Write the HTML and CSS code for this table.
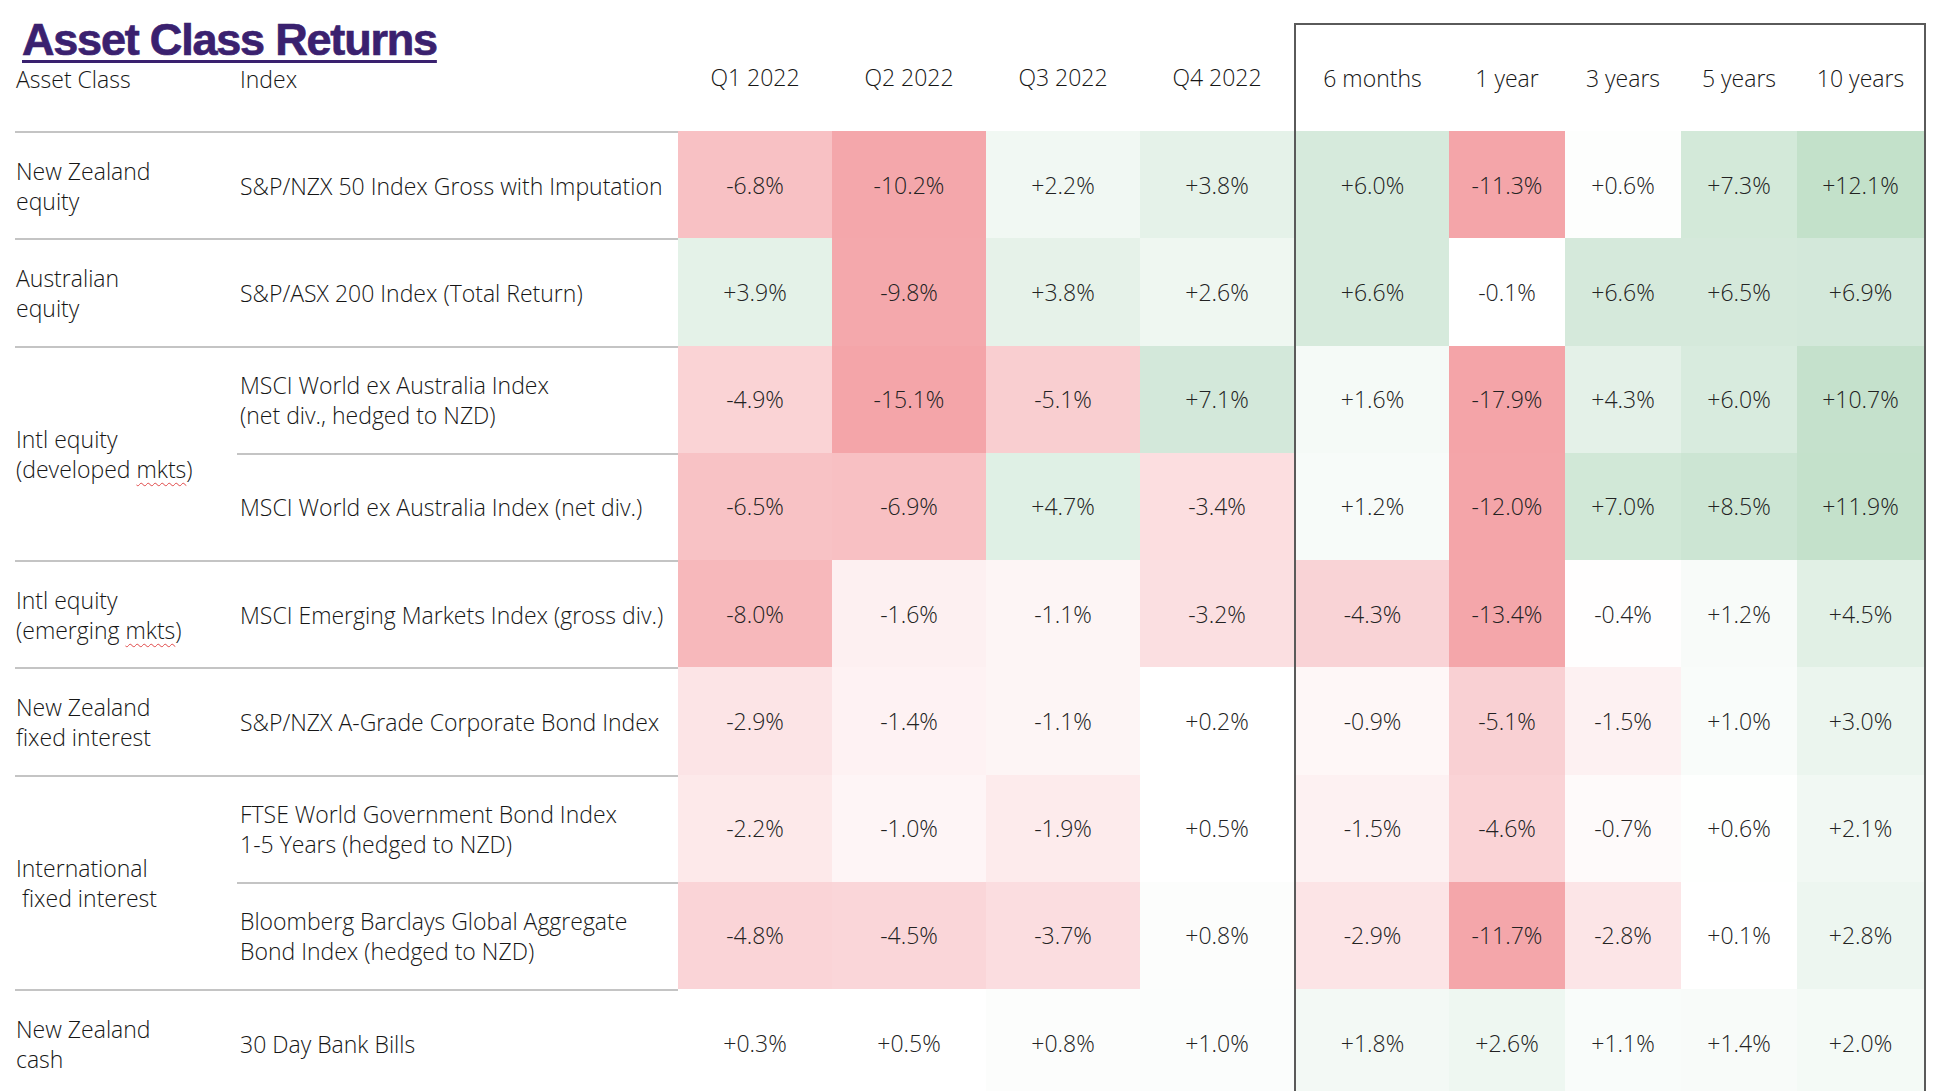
FILE: index.html
```html
<!DOCTYPE html>
<html lang="en">
<head>
<meta charset="utf-8">
<title>Asset Class Returns</title>
<link rel="stylesheet" href="styles.css">
</head>
<body>
<div class="page">
  <div class="left">
    <div class="head-left">
      <h1 class="title">Asset Class Returns</h1>
      <div class="labels"><span>Asset Class</span><span>Index</span></div>
    </div>
    <div class="qh">Q1 2022</div>
    <div class="qh">Q2 2022</div>
    <div class="qh">Q3 2022</div>
    <div class="qh">Q4 2022</div>

    <div class="ac"><div>New Zealand<br>equity</div></div>
    <div class="ix"><div>S&amp;P/NZX 50 Index Gross with Imputation</div></div>
    <div class="v" style="background:#f8c1c4">-6.8%</div>
    <div class="v" style="background:#f4a7ab">-10.2%</div>
    <div class="v" style="background:#f1f8f3">+2.2%</div>
    <div class="v" style="background:#e5f2e9">+3.8%</div>

    <div class="ac"><div>Australian<br>equity</div></div>
    <div class="ix"><div>S&amp;P/ASX 200 Index (Total Return)</div></div>
    <div class="v" style="background:#e4f2e8">+3.9%</div>
    <div class="v" style="background:#f4a8ac">-9.8%</div>
    <div class="v" style="background:#e6f2e9">+3.8%</div>
    <div class="v" style="background:#eff7f1">+2.6%</div>

    <div class="ac span2"><div>Intl equity<br>(developed <span class="sp">mkts</span>)</div></div>
    <div class="ix"><div>MSCI World ex Australia Index<br>(net div., hedged to NZD)</div></div>
    <div class="v" style="background:#fad3d5">-4.9%</div>
    <div class="v" style="background:#f4a5a9">-15.1%</div>
    <div class="v" style="background:#f9ced0">-5.1%</div>
    <div class="v" style="background:#d3e8da">+7.1%</div>

    <div class="ix"><div>MSCI World ex Australia Index (net div.)</div></div>
    <div class="v" style="background:#f8c2c5">-6.5%</div>
    <div class="v" style="background:#f8c0c3">-6.9%</div>
    <div class="v" style="background:#dff0e5">+4.7%</div>
    <div class="v" style="background:#fcdee0">-3.4%</div>

    <div class="ac"><div>Intl equity<br>(emerging <span class="sp">mkts</span>)</div></div>
    <div class="ix"><div>MSCI Emerging Markets Index (gross div.)</div></div>
    <div class="v" style="background:#f7b8bb">-8.0%</div>
    <div class="v" style="background:#fdf0f1">-1.6%</div>
    <div class="v" style="background:#fdf5f5">-1.1%</div>
    <div class="v" style="background:#fbdfe1">-3.2%</div>

    <div class="ac"><div>New Zealand<br>fixed interest</div></div>
    <div class="ix"><div>S&amp;P/NZX A-Grade Corporate Bond Index</div></div>
    <div class="v" style="background:#fce4e6">-2.9%</div>
    <div class="v" style="background:#fef2f3">-1.4%</div>
    <div class="v" style="background:#fdf5f5">-1.1%</div>
    <div class="v" style="background:#ffffff">+0.2%</div>

    <div class="ac span2"><div>International<br><span class="indent">fixed interest</span></div></div>
    <div class="ix"><div>FTSE World Government Bond Index<br>1-5 Years (hedged to NZD)</div></div>
    <div class="v" style="background:#fde9ea">-2.2%</div>
    <div class="v" style="background:#fef5f6">-1.0%</div>
    <div class="v" style="background:#fdebec">-1.9%</div>
    <div class="v" style="background:#ffffff">+0.5%</div>

    <div class="ix"><div>Bloomberg Barclays Global Aggregate<br>Bond Index (hedged to NZD)</div></div>
    <div class="v" style="background:#fad4d7">-4.8%</div>
    <div class="v" style="background:#fad6d9">-4.5%</div>
    <div class="v" style="background:#fbdde0">-3.7%</div>
    <div class="v" style="background:#fcfdfc">+0.8%</div>

    <div class="ac"><div>New Zealand<br>cash</div></div>
    <div class="ix"><div>30 Day Bank Bills</div></div>
    <div class="v" style="background:#ffffff">+0.3%</div>
    <div class="v" style="background:#ffffff">+0.5%</div>
    <div class="v" style="background:#fcfdfc">+0.8%</div>
    <div class="v" style="background:#fbfdfc">+1.0%</div>
  </div>

  <div class="right">
    <div class="rh">6 months</div>
    <div class="rh">1 year</div>
    <div class="rh">3 years</div>
    <div class="rh">5 years</div>
    <div class="rh">10 years</div>

    <div class="v" style="background:#d6eadc">+6.0%</div>
    <div class="v" style="background:#f4a5a9">-11.3%</div>
    <div class="v" style="background:#fdfefd">+0.6%</div>
    <div class="v" style="background:#d3e9d9">+7.3%</div>
    <div class="v" style="background:#c3e1ca">+12.1%</div>

    <div class="v" style="background:#d6eadc">+6.6%</div>
    <div class="v" style="background:#ffffff">-0.1%</div>
    <div class="v" style="background:#d5e9db">+6.6%</div>
    <div class="v" style="background:#d5e9db">+6.5%</div>
    <div class="v" style="background:#d3e8da">+6.9%</div>

    <div class="v" style="background:#f5faf7">+1.6%</div>
    <div class="v" style="background:#f4a4a8">-17.9%</div>
    <div class="v" style="background:#e4f1e8">+4.3%</div>
    <div class="v" style="background:#d8ebde">+6.0%</div>
    <div class="v" style="background:#c5e1cc">+10.7%</div>

    <div class="v" style="background:#f7fbf9">+1.2%</div>
    <div class="v" style="background:#f4a5a9">-12.0%</div>
    <div class="v" style="background:#d1e8d7">+7.0%</div>
    <div class="v" style="background:#cce5d3">+8.5%</div>
    <div class="v" style="background:#c4e1cb">+11.9%</div>

    <div class="v" style="background:#f9d3d6">-4.3%</div>
    <div class="v" style="background:#f4a6aa">-13.4%</div>
    <div class="v" style="background:#fffefe">-0.4%</div>
    <div class="v" style="background:#f8fbf9">+1.2%</div>
    <div class="v" style="background:#e1f0e5">+4.5%</div>

    <div class="v" style="background:#fef7f7">-0.9%</div>
    <div class="v" style="background:#f9d0d3">-5.1%</div>
    <div class="v" style="background:#fdf1f2">-1.5%</div>
    <div class="v" style="background:#f9fcfa">+1.0%</div>
    <div class="v" style="background:#ebf5ee">+3.0%</div>

    <div class="v" style="background:#fdf1f2">-1.5%</div>
    <div class="v" style="background:#fad3d6">-4.6%</div>
    <div class="v" style="background:#fefafa">-0.7%</div>
    <div class="v" style="background:#fefffe">+0.6%</div>
    <div class="v" style="background:#f1f8f3">+2.1%</div>

    <div class="v" style="background:#fce4e6">-2.9%</div>
    <div class="v" style="background:#f4a6aa">-11.7%</div>
    <div class="v" style="background:#fce5e7">-2.8%</div>
    <div class="v" style="background:#ffffff">+0.1%</div>
    <div class="v" style="background:#edf6f0">+2.8%</div>

    <div class="v" style="background:#f3f9f5">+1.8%</div>
    <div class="v" style="background:#eef7f1">+2.6%</div>
    <div class="v" style="background:#f9fcfa">+1.1%</div>
    <div class="v" style="background:#f8fbf9">+1.4%</div>
    <div class="v" style="background:#f4faf6">+2.0%</div>
  </div>
</div>
</body>
</html>
```
FILE: styles.css
```css
html, body {
  margin: 0;
  padding: 0;
  overflow: hidden;
  background: #ffffff;
}

body {
  font-family: "Open Sans", "Segoe UI", sans-serif;
  font-weight: 300;
  font-size: 23px;
  color: #161616;
}

.page {
  display: flex;
  align-items: flex-start;
  padding-left: 15px;
}

.left {
  display: grid;
  grid-template-columns: 222px 441px repeat(4, 154px);
  grid-template-rows: 131px repeat(9, 107.25px);
}

.right {
  margin-top: 23px;
  border: 2px solid #5a5a5a;
  border-bottom: none;
  display: grid;
  grid-template-columns: 153px 116px 116px 116px 127px;
  grid-template-rows: 106px repeat(9, 107.25px);
}

.head-left {
  grid-column: span 2;
  display: flex;
  flex-direction: column;
  padding-top: 15px;
}

.title {
  margin: 0 0 0 7px;
  font-family: "Liberation Sans", Arial, sans-serif;
  font-weight: 700;
  font-size: 45px;
  line-height: 49px;
  color: #3a216f;
  letter-spacing: -1.2px;
  -webkit-text-stroke: 0.7px #3a216f;
  text-decoration: underline;
  text-decoration-thickness: 3px;
  text-underline-offset: 5px;
  align-self: flex-start;
}

.labels {
  display: grid;
  grid-template-columns: 222px 1fr;
  line-height: 30px;
}

.labels span:first-child {
  padding-left: 1px;
}

.labels span:last-child {
  padding-left: 3px;
}

.qh {
  display: flex;
  align-items: center;
  justify-content: center;
  padding-top: 23px;
}

.rh {
  display: flex;
  align-items: center;
  justify-content: center;
}

.ac {
  border-top: 2px solid #c4c4c4;
  display: flex;
  align-items: center;
  padding-left: 1px;
  line-height: 30px;
}

.ac.span2 {
  grid-row: span 2;
}

.indent {
  padding-left: 6px;
}

.ix {
  border-top: 2px solid #c4c4c4;
  display: flex;
  align-items: center;
  padding-left: 3px;
  line-height: 30px;
  white-space: nowrap;
}

.v {
  display: flex;
  align-items: center;
  justify-content: center;
  color: #222222;
}

.sp {
  text-decoration: underline wavy #e04848;
  text-decoration-thickness: 1px;
  text-underline-offset: 4px;
  text-decoration-skip-ink: none;
}
```
